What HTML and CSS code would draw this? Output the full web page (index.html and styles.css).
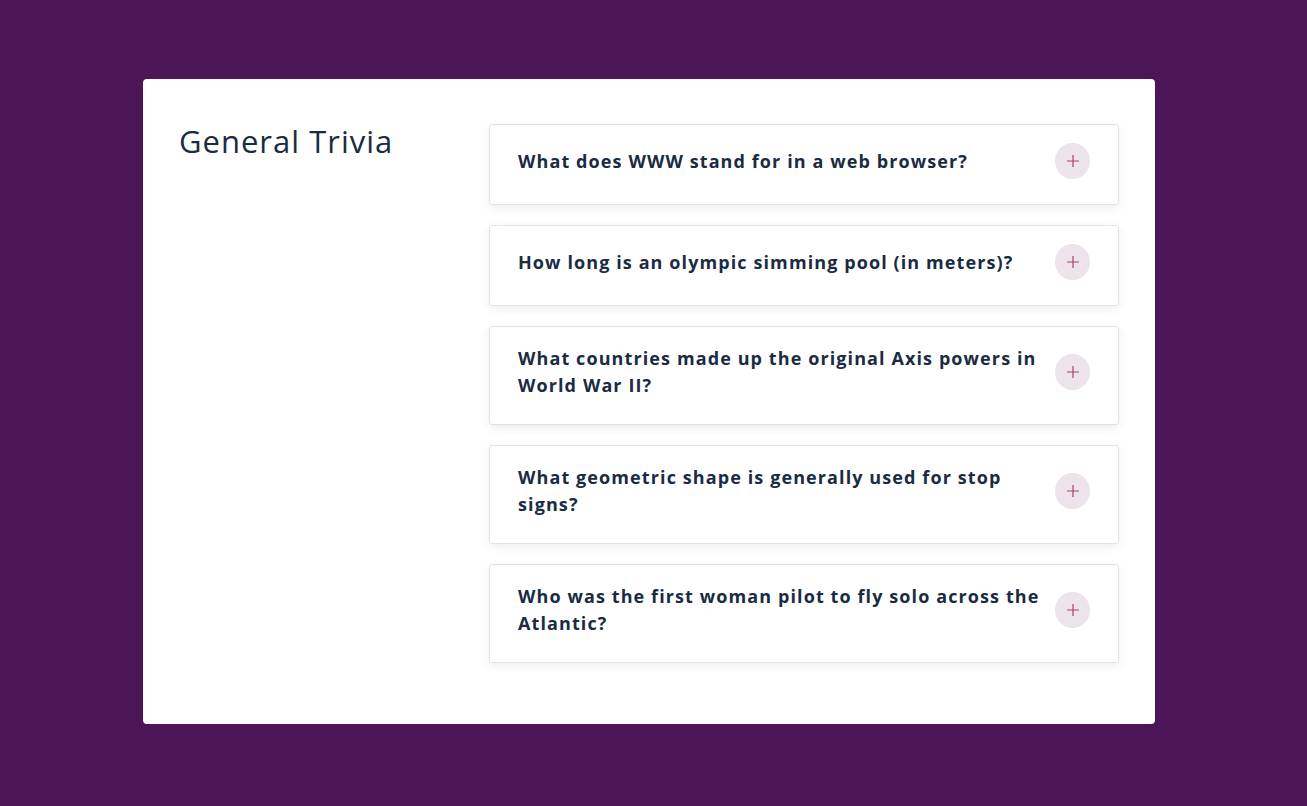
FILE: index.html
```html
<!DOCTYPE html>
<html lang="en">
<head>
<meta charset="utf-8">
<title>General Trivia</title>
<link rel="stylesheet" href="styles.css">
</head>
<body>
<main class="card">
  <h1 class="title">General Trivia</h1>
  <ul class="faq">
    <li class="item"><span class="q">What does WWW stand for in a web browser?</span><button class="toggle" aria-label="Expand"><svg width="14" height="14" viewBox="0 0 14 14"><path d="M7 1v12M1 7h12" stroke="#b0406e" stroke-width="1.2"/></svg></button></li>
    <li class="item"><span class="q">How long is an olympic simming pool (in meters)?</span><button class="toggle" aria-label="Expand"><svg width="14" height="14" viewBox="0 0 14 14"><path d="M7 1v12M1 7h12" stroke="#b0406e" stroke-width="1.2"/></svg></button></li>
    <li class="item"><span class="q">What countries made up the original Axis powers in World War II?</span><button class="toggle" aria-label="Expand"><svg width="14" height="14" viewBox="0 0 14 14"><path d="M7 1v12M1 7h12" stroke="#b0406e" stroke-width="1.2"/></svg></button></li>
    <li class="item"><span class="q">What geometric shape is generally used for stop signs?</span><button class="toggle" aria-label="Expand"><svg width="14" height="14" viewBox="0 0 14 14"><path d="M7 1v12M1 7h12" stroke="#b0406e" stroke-width="1.2"/></svg></button></li>
    <li class="item"><span class="q">Who was the first woman pilot to fly solo across the Atlantic?</span><button class="toggle" aria-label="Expand"><svg width="14" height="14" viewBox="0 0 14 14"><path d="M7 1v12M1 7h12" stroke="#b0406e" stroke-width="1.2"/></svg></button></li>
  </ul>
</main>
</body>
</html>
```

FILE: styles.css
```css
html, body {
  margin: 0;
  padding: 0;
  background: #4c1558;
  font-family: "Open Sans", "Noto Sans", sans-serif;
  color: #1a2b42;
}
body {
  padding-top: 79px;
  height: 806px;
  box-sizing: border-box;
}
.card {
  margin-left: 143px;
  width: 1012px;
  height: 645px;
  box-sizing: border-box;
  background: #fff;
  border-radius: 4px;
  padding: 43px 36px 0 36px;
  display: flex;
}
.title {
  width: 310px;
  margin: 0;
  font-size: 31px;
  font-weight: 500;
  letter-spacing: 1px;
  line-height: 38px;
  color: #1a2b42;
  flex: none;
}
.faq {
  list-style: none;
  margin: 2px 0 0 0;
  padding: 0;
  width: 630px;
  display: flex;
  flex-direction: column;
  gap: 20px;
}
.item {
  border: 1px solid #e3e3e3;
  border-radius: 3px;
  box-shadow: 0 3px 10px rgba(0,0,0,0.07);
  padding: 18px 28px 25px 28px;
  display: flex;
  align-items: center;
  justify-content: space-between;
  gap: 8px;
}
.q {
  font-size: 18px;
  font-weight: 700;
  letter-spacing: 1.1px;
  line-height: 27px;
}
.toggle {
  flex: none;
  width: 35px;
  height: 36px;
  border-radius: 50%;
  border: none;
  background: #ece4ea;
  padding: 0;
  display: flex;
  align-items: center;
  justify-content: center;
}
```
